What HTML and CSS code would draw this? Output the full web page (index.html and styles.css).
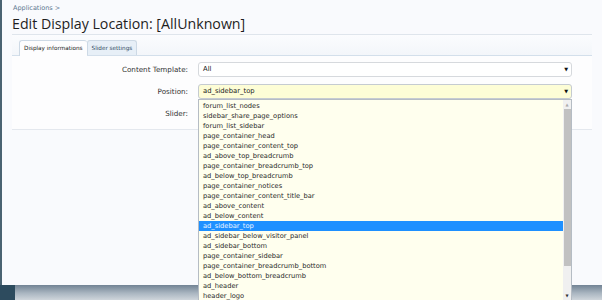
FILE: index.html
```html
<!DOCTYPE html>
<html lang="en">
<head>
    <meta charset="UTF-8">
    <title>Edit Display Location</title>
    <link rel="stylesheet" href="styles.css">
</head>
<body>
<div class="screen">
    <div class="panel">
        <div class="breadcrumb">Applications &gt;</div>
        <h1 class="title">Edit Display Location: [AllUnknown]</h1>

        <div class="tabs">
            <span class="tab active">Display informations</span>
            <span class="tab">Slider settings</span>
        </div>

        <div class="form">
            <div class="row">
                <label class="label">Content Template:</label>
                <div class="select">All<span class="arrow">&#9660;</span></div>
            </div>
            <div class="row">
                <label class="label">Position:</label>
                <div class="select focused">ad_sidebar_top<span class="arrow">&#9660;</span></div>
            </div>
            <div class="row">
                <label class="label">Slider:</label>
            </div>
        </div>
    </div>

    <div class="bottom-strip">
        <div class="taskbar-corner"></div>
        <div class="shadow"></div>
    </div>

    <!-- open dropdown of the Position select -->
    <div class="dropdown">
        <ul class="options">
            <li>forum_list_nodes</li>
            <li>sidebar_share_page_options</li>
            <li>forum_list_sidebar</li>
            <li>page_container_head</li>
            <li>page_container_content_top</li>
            <li>ad_above_top_breadcrumb</li>
            <li>page_container_breadcrumb_top</li>
            <li>ad_below_top_breadcrumb</li>
            <li>page_container_notices</li>
            <li>page_container_content_title_bar</li>
            <li>ad_above_content</li>
            <li>ad_below_content</li>
            <li class="selected">ad_sidebar_top</li>
            <li>ad_sidebar_below_visitor_panel</li>
            <li>ad_sidebar_bottom</li>
            <li>page_container_sidebar</li>
            <li>page_container_breadcrumb_bottom</li>
            <li>ad_below_bottom_breadcrumb</li>
            <li>ad_header</li>
            <li>header_logo</li>
        </ul>
        <div class="scrollbar">
            <span class="scroll-up">&#9650;</span>
            <span class="thumb"></span>
            <span class="scroll-down">&#9660;</span>
        </div>
    </div>
</div>
</body>
</html>
```

FILE: styles.css
```css
body {
    margin: 0;
    font-family: 'DejaVu Sans', sans-serif;
    background: #f8f9fc;
}

.screen {
    position: relative;
    width: 602px;
    height: 300px;
    overflow: hidden;
}

/* Main panel */
.panel {
    height: 285px;
    box-sizing: border-box;
    border-left: 2px solid #4b6372;
    background: #f9fafd;
    padding: 0 10px 0 10px;
}

.breadcrumb {
    padding-top: 4px;
    padding-left: 1px;
    font-size: 6.5px;
    color: #5d7890;
    height: 9px;
}

.title {
    margin: 0;
    font-family: 'Open Sans', sans-serif;
    font-weight: normal;
    font-size: 14.2px;
    line-height: 21px;
    color: #1e1e1e;
    height: 21px;
    border-bottom: 1px solid #dfe5ec;
}

/* Tabs */
.tabs {
    display: flex;
    padding: 5px 0 0 7px;
    height: 15px;
    border-bottom: 1px solid #d3dfeb;
    background: linear-gradient(#fbfcfe, #f3f6fa);
}

.tab {
    font-size: 5.7px;
    line-height: 14px;
    padding: 0 4px;
    color: #2f4a62;
    border: 1px solid #cdd9e5;
    border-bottom: none;
    border-radius: 3px 3px 0 0;
    background: #e7eff7;
}

.tab.active {
    background: #fdfdfe;
    color: #222;
    border-right: none;
    height: 15px;
}

/* Form */
.form {
    padding: 6px 0 8px;
    display: flex;
    flex-direction: column;
    gap: 7px;
    border-bottom: 1px solid #e4e8ee;
    background: #fdfdfe;
}

.row {
    display: flex;
    align-items: center;
    gap: 10px;
    height: 15px;
}

.label {
    width: 176px;
    text-align: right;
    font-size: 7.2px;
    color: #333;
}

.select {
    position: relative;
    width: 374px;
    height: 15px;
    box-sizing: border-box;
    border: 1px solid #d6d9dd;
    border-radius: 3px;
    background: #fff;
    font-size: 6.8px;
    line-height: 13px;
    padding-left: 4px;
    color: #222;
}

.select.focused {
    background: #fdfdd6;
    border-color: #c5cbd1;
}

.arrow {
    position: absolute;
    right: 3px;
    top: 0;
    font-size: 5px;
    color: #111;
}

/* Strip under the panel */
.bottom-strip {
    display: flex;
    height: 15px;
}

.taskbar-corner {
    width: 15px;
    background: #2d4b5e;
}

.shadow {
    flex: 1;
    background: linear-gradient(#728394, #aab6c1 55%, #cfd5db);
}

/* Open dropdown */
.dropdown {
    position: absolute;
    left: 198px;
    top: 99px;
    width: 374px;
    height: 201px;
    box-sizing: border-box;
    border: 1px solid #b5bcc4;
    border-bottom: none;
    background: #ffffee;
    display: flex;
}

.options {
    list-style: none;
    margin: 0;
    padding: 1px 0 0;
    flex: 1;
}

.options li {
    height: 10px;
    line-height: 10px;
    font-size: 6.7px;
    padding-left: 4px;
    color: #2a2a2a;
}

.options li.selected {
    background: #1e90ff;
    color: #eaf4ff;
}

.scrollbar {
    width: 8px;
    background: #f0f0f0;
    display: flex;
    flex-direction: column;
    align-items: center;
}

.scroll-up, .scroll-down {
    font-size: 4px;
    line-height: 9px;
    color: #aaa;
}

.scroll-down {
    color: #333;
}

.thumb {
    width: 7px;
    height: 157px;
    background: #c1c1c1;
    margin-bottom: auto;
}
```
